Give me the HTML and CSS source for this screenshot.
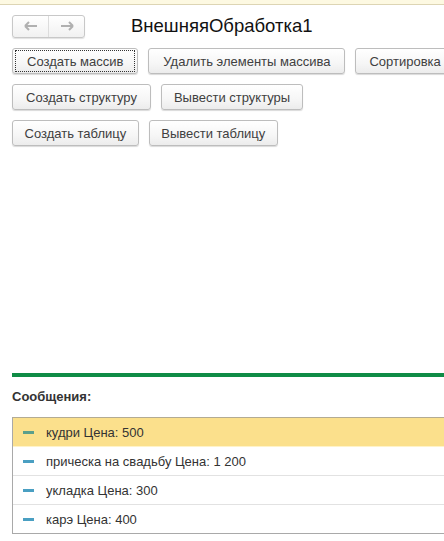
FILE: index.html
```html
<!DOCTYPE html>
<html lang="ru">
<head>
<meta charset="utf-8">
<title>ВнешняяОбработка1</title>
<link rel="stylesheet" href="styles.css">
</head>
<body>
<div class="topband"></div>
<div class="page">
  <div class="header">
    <div class="nav">
      <span class="nav-btn">
        <svg width="14" height="10" viewBox="0 0 14 10"><path d="M1 5 L5 1 M1 5 L5 9 M1 5 H13" stroke="#b0b0b0" stroke-width="2" fill="none"/></svg>
      </span>
      <span class="nav-btn">
        <svg width="14" height="10" viewBox="0 0 14 10"><path d="M13 5 L9 1 M13 5 L9 9 M13 5 H1" stroke="#b0b0b0" stroke-width="2" fill="none"/></svg>
      </span>
    </div>
    <h1 class="title">ВнешняяОбработка1</h1>
  </div>
  <div class="btn-row first">
    <button class="btn focused"><span class="focus-ring">Создать массив</span></button>
    <button class="btn">Удалить элементы массива</button>
    <button class="btn">Сортировка</button>
  </div>
  <div class="btn-row">
    <button class="btn">Создать структуру</button>
    <button class="btn">Вывести структуры</button>
  </div>
  <div class="btn-row compact">
    <button class="btn">Создать таблицу</button>
    <button class="btn">Вывести таблицу</button>
  </div>
  <div class="spacer"></div>
  <div class="divider"></div>
  <div class="msg-title">Сообщения:</div>
  <div class="messages">
    <div class="msg selected"><span class="dash"></span>кудри Цена: 500</div>
    <div class="msg"><span class="dash"></span>прическа на свадьбу Цена: 1 200</div>
    <div class="msg"><span class="dash"></span>укладка Цена: 300</div>
    <div class="msg"><span class="dash"></span>карэ Цена: 400</div>
  </div>
</div>
</body>
</html>
```
FILE: styles.css
```css
html, body {
  margin: 0;
  padding: 0;
  background: #ffffff;
  overflow: hidden;
}
body {
  font-family: "Liberation Sans", Arial, sans-serif;
  font-size: 13px;
  color: #333333;
  width: 444px;
  height: 541px;
}
.topband {
  height: 4px;
  background: #fdf9e2;
  border-bottom: 1px solid #ddd5b4;
}
.page {
  padding: 0 0 0 12px;
  display: flex;
  flex-direction: column;
}
.header {
  display: flex;
  align-items: center;
  height: 24px;
  margin-top: 9px;
}
.nav {
  display: flex;
  width: 73px;
  height: 23px;
  box-sizing: border-box;
  border: 1px solid #c8c8c8;
  border-radius: 3px;
  background: linear-gradient(#ffffff, #f1f1f1);
  box-shadow: 0 1px 1px rgba(0,0,0,0.12);
}
.nav-btn {
  flex: 1;
  display: flex;
  align-items: center;
  justify-content: center;
}
.nav-btn + .nav-btn {
  border-left: 1px solid #dcdcdc;
}
.title {
  margin: 0 0 0 46px;
  font-size: 18.5px;
  font-weight: normal;
  color: #111111;
  line-height: 24px;
  white-space: nowrap;
}
.btn-row {
  display: flex;
  gap: 10px;
  margin-top: 10px;
  white-space: nowrap;
}
.btn {
  flex: none;
  height: 26px;
  padding: 0 13px;
  font-family: "Liberation Sans", Arial, sans-serif;
  font-size: 13px;
  color: #404040;
  background: linear-gradient(#ffffff 0%, #f6f6f6 60%, #ececec 100%);
  border: 1px solid #bdbdbd;
  border-radius: 3px;
  box-shadow: 0 1px 1px rgba(0,0,0,0.15);
  white-space: nowrap;
  display: flex;
  align-items: center;
}
.btn-row .btn:nth-child(2) {
  padding: 0 12px;
}
.first .btn:nth-child(2) {
  padding: 0 14px;
}
.compact .btn {
  padding: 0 11.5px;
}
.compact .btn:nth-child(2) {
  padding: 0 11.5px;
}
.btn.focused {
  padding: 0 2px;
}
.focus-ring {
  display: flex;
  align-items: center;
  height: 20px;
  padding: 0 11px;
  border: 1px dotted #333333;
}
.spacer {
  height: 227px;
}
.divider {
  height: 4px;
  background: #0f8c46;
}
.msg-title {
  font-weight: bold;
  font-size: 13px;
  color: #333333;
  margin-top: 12px;
  height: 16px;
  line-height: 16px;
}
.messages {
  margin-top: 12px;
  border: 1px solid #a9a9a9;
  border-right: none;
  border-top-color: #b3ab93;
}
.msg {
  box-sizing: border-box;
  display: flex;
  align-items: center;
  height: 29px;
  padding-left: 10px;
  color: #333333;
  border-top: 1px solid #e2e2e2;
}
.msg:first-child {
  border-top: none;
}
.msg.selected {
  background: #fbe08c;
  border-bottom: 1px solid #fff3c8;
}
.msg.selected + .msg {
  border-top: none;
  height: 28px;
}
.dash {
  width: 11px;
  height: 3px;
  background: #4a9fc2;
  margin-right: 12px;
}
.msg.selected .dash {
  background: #5b9f8c;
}
```
